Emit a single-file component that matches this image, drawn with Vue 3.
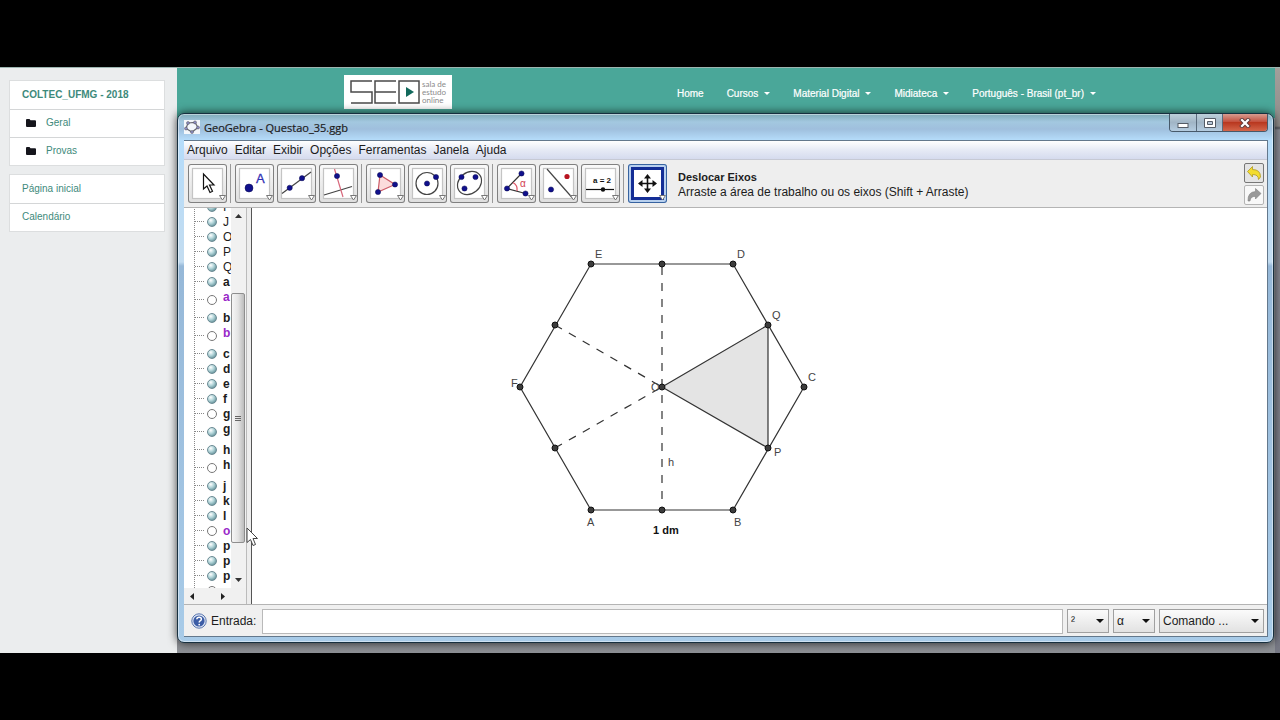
<template>
  <div class="stage">
    <div class="screen">
      <aside class="side">
        <nav class="card">
          <h2 class="card-title">COLTEC_UFMG - 2018</h2>
          <a v-for="item in folders" :key="item" href="#" class="card-row folder-row">
            <svg class="folder" width="10" height="8" viewBox="0 0 10 8">
              <path d="M0 1q0-1 1-1h2.5l1 1.2H9q1 0 1 1V7q0 1-1 1H1Q0 8 0 7z" fill="#15151c" />
            </svg>
            {{ item }}
          </a>
        </nav>
        <nav class="card">
          <a v-for="item in pages" :key="item" href="#" class="card-row">{{ item }}</a>
        </nav>
      </aside>

      <main class="site">
        <header class="site-header">
          <a href="#" class="logo" aria-label="SEO">
            <svg width="70" height="24" viewBox="0 0 70 24" fill="none" stroke="#4a4a4a" stroke-width="1.5">
              <path d="M22 1H1v11h21v11H1M46 1H25v22h21M25 12h21M49 1h20v22H49z" />
              <path d="M56 7v10l8-5z" fill="#12695c" stroke="none" />
            </svg>
            <span class="logo-text">sala de<br>estudo<br>online</span>
          </a>
          <nav class="site-nav">
            <a v-for="link in links" :key="link.label" href="#" class="site-link">
              {{ link.label }}<i v-if="link.menu" class="caret"></i>
            </a>
          </nav>
        </header>
      </main>
      <div class="edge"></div>

      <section class="window">
        <div class="titlebar">
          <svg width="16" height="14" viewBox="0 0 16 14">
            <rect x="0" y="0" width="16" height="14" fill="#f4f7fb" />
            <path d="M4 3l7-.6 3 5.100-6 4.500-6-3.500z" fill="none" stroke="#66666f" stroke-width="1.200" />
            <g fill="#8b8bc4" stroke="#555" stroke-width=".5">
              <circle cx="4" cy="3" r="1.5" /><circle cx="11" cy="2.4" r="1.5" />
              <circle cx="14" cy="7.5" r="1.5" /><circle cx="2" cy="8.5" r="1.5" />
              <circle cx="8" cy="12" r="1.5" />
            </g>
          </svg>
          <span class="title">GeoGebra - Questao_35.ggb</span>
          <div class="win-buttons">
            <button class="win-btn min" aria-label="Minimizar">
              <svg width="12" height="12" viewBox="0 0 12 12"><rect x="1" y="6.500" width="10" height="4" fill="#fff" stroke="#555c66" /></svg>
            </button>
            <button class="win-btn max" aria-label="Maximizar">
              <svg width="12" height="10" viewBox="0 0 12 10" fill="#fff" stroke="#555c66"><path d="M.5.500h11v9H.5z" /><path d="M3.500 3.500h5v3h-5z" fill="#b8c7d8" /></svg>
            </button>
            <button class="win-btn close" aria-label="Fechar">
              <svg width="12" height="10" viewBox="0 0 12 10" stroke-linecap="square">
                <path d="M3 2l6 6M9 2L3 8" stroke="#5c3a3a" stroke-width="4" />
                <path d="M3 2l6 6M9 2L3 8" stroke="#fff" stroke-width="2.200" />
              </svg>
            </button>
          </div>
        </div>

        <div class="client">
          <nav class="menubar">
            <button v-for="m in menus" :key="m" class="menu">{{ m }}</button>
          </nav>

          <div class="toolbar">
            <div v-for="(group, gi) in toolGroups" :key="gi" class="tool-group">
              <button v-for="tool in group" :key="tool" class="tool" :class="{ active: tool === 'move-view' }" :aria-label="tool">
                <svg width="39" height="39" viewBox="0 0 39 39" fill="none" stroke-width="1.200">
                  <rect class="tool-box" x="4.500" y="4.500" width="30" height="30" />
                  <path v-if="tool === 'pointer'" d="M15.500 10v15l3.500-3 3 6.500 2.500-1.200-3-6.300h4.500z" fill="#fff" stroke="#111" />
                  <template v-else-if="tool === 'point'">
                    <circle cx="14" cy="24" r="4" class="blue" />
                    <text x="21" y="19" class="letter-a">A</text>
                  </template>
                  <template v-else-if="tool === 'line'">
                    <path d="M5 29.500L34 8" stroke="#444" />
                    <circle cx="12.700" cy="23.800" r="2.600" class="blue" /><circle cx="25" cy="14.200" r="2.600" class="blue" />
                  </template>
                  <template v-else-if="tool === 'perpendicular'">
                    <path d="M5 31l28-8.500" stroke="#444" /><path d="M15.500 5L24 33" stroke="#d8687c" />
                    <circle cx="18" cy="12" r="2.600" class="blue" />
                  </template>
                  <template v-else-if="tool === 'polygon'">
                    <path d="M14 11l15 9.500L12 28z" fill="#fbdcdc" stroke="#cc5a66" />
                    <circle cx="14" cy="11" r="2.600" class="blue" /><circle cx="29" cy="20.500" r="2.600" class="blue" /><circle cx="12" cy="28" r="2.600" class="blue" />
                  </template>
                  <template v-else-if="tool === 'circle'">
                    <circle cx="19" cy="19.500" r="11" stroke="#444" />
                    <circle cx="19" cy="19.500" r="2.600" class="blue" /><circle cx="28" cy="13" r="2.600" class="blue" />
                  </template>
                  <template v-else-if="tool === 'conic'">
                    <ellipse cx="19.500" cy="19" rx="13" ry="10.500" transform="rotate(-40 19.500 19)" stroke="#444" />
                    <circle cx="11.500" cy="13" r="2.600" class="blue" /><circle cx="25.500" cy="13" r="2.600" class="blue" /><circle cx="14.500" cy="24.500" r="2.600" class="blue" />
                  </template>
                  <template v-else-if="tool === 'angle'">
                    <path d="M24.500 9.500L10 24.500l18.500 5" stroke="#333" />
                    <path d="M16 18.500q5 3 4 8.500" stroke="#dd5566" />
                    <text x="23" y="23" class="alpha">α</text>
                    <circle cx="24.500" cy="9.500" r="2.600" class="blue" /><circle cx="10" cy="24.500" r="2.600" class="blue" /><circle cx="28.500" cy="29.500" r="2.600" class="blue" />
                  </template>
                  <template v-else-if="tool === 'reflect'">
                    <path d="M8 5l25 28.500" stroke="#444" />
                    <circle cx="12" cy="25.500" r="2.600" class="blue" /><circle cx="28" cy="12.500" r="2.600" fill="#b81420" />
                  </template>
                  <template v-else-if="tool === 'slider'">
                    <text x="12" y="19" class="slider-text">a = 2</text>
                    <path d="M5 25.500h28" stroke="#111" /><circle cx="22" cy="25.500" r="2.200" fill="#111" />
                  </template>
                  <g v-else fill="#111">
                    <path d="M19.500 13v13M13 19.500h13" stroke="#111" stroke-width="1.600" />
                    <path d="M19.500 10l-3.500 4.500h7zM19.500 29l-3.500-4.500h7zM10 19.500l4.500-3.500v7zM29 19.500l-4.500-3.500v7z" />
                  </g>
                  <path d="M31.500 31.500h6l-3 4.500z" fill="#fff" stroke="#777" stroke-width="1" />
                </svg>
              </button>
            </div>
            <div class="tool-help">
              <strong>Deslocar Eixos</strong>
              <span>Arraste a área de trabalho ou os eixos (Shift + Arraste)</span>
            </div>
            <div class="history">
              <button class="hist undo" aria-label="Desfazer">
                <svg width="16" height="16" viewBox="0 0 16 16"><path d="M1.500 6.500L6.500 1.500v3q8 0 8 7.500l-2 2.500q0-5-6-5v2.500z" fill="#f3dc2e" stroke="#b09a20" stroke-width=".8" /></svg>
              </button>
              <button class="hist" aria-label="Refazer">
                <svg width="16" height="16" viewBox="0 0 16 16"><path d="M15 6.500L9.500 1.500v3Q1.500 5 2 14h2q.5-5 5.500-4.500V12z" fill="#999" stroke="#808080" stroke-width=".6" /></svg>
              </button>
            </div>
          </div>

          <div class="work">
            <div class="algebra">
              <div class="tree-wrap">
                <div class="tree">
                  <ul>
                    <li v-for="(row, i) in rows" :key="i" :class="{ tall: row.tall, caps: row.caps }">
                      <span class="branch"></span>
                      <span class="ball" :class="{ hollow: row.hollow }"></span>
                      <span class="name" :class="{ purple: row.purple }">{{ row.name }}</span>
                    </li>
                  </ul>
                </div>
                <div class="scroll-v">
                  <button class="arrow" aria-label="Subir"><svg width="7" height="4" viewBox="0 0 7 4"><path d="M0 4l3.500-4L7 4z" fill="#333" /></svg></button>
                  <div class="track-above"></div>
                  <div class="thumb"><i></i><i></i><i></i></div>
                  <div class="track-below"></div>
                  <button class="arrow" aria-label="Descer"><svg width="7" height="4" viewBox="0 0 7 4"><path d="M0 0l3.500 4L7 0z" fill="#333" /></svg></button>
                </div>
              </div>
              <div class="scroll-h">
                <button class="arrow" aria-label="Esquerda"><svg width="4" height="7" viewBox="0 0 4 7"><path d="M4 0L0 3.500 4 7z" fill="#222" /></svg></button>
                <button class="arrow" aria-label="Direita"><svg width="4" height="7" viewBox="0 0 4 7"><path d="M0 0l4 3.500L0 7z" fill="#222" /></svg></button>
              </div>
              <svg class="cursor" width="13" height="20" viewBox="0 0 13 20">
                <path d="M1 1v14.500l3.500-3 2.500 6 2.500-1-2.500-6h4.500z" fill="#fff" stroke="#444" />
              </svg>
            </div>
            <div class="splitter"></div>
            <svg class="graphics">
              <polygon points="410,179 516,240 516,117" fill="#e4e4e4" stroke="#333" stroke-width="1.200" />
              <polygon points="339,302 481,302 552,179 481,56 339,56 268,179" fill="none" stroke="#333" stroke-width="1.200" />
              <g stroke="#333" stroke-width="1.200" stroke-dasharray="8 8">
                <line x1="410" y1="59" x2="410" y2="302" />
                <line x1="303" y1="117" x2="410" y2="179" />
                <line x1="303" y1="240" x2="410" y2="179" />
              </g>
              <circle v-for="(p, i) in points" :key="i" :cx="p[0]" :cy="p[1]" r="3" fill="#3c3c3c" stroke="#111" />
              <text v-for="l in labels" :key="l.text" :x="l.x" :y="l.y" class="label">{{ l.text }}</text>
              <text x="401" y="326" class="measure">1 dm</text>
            </svg>
          </div>

          <form class="inputbar" @submit.prevent>
            <svg width="16" height="16" viewBox="0 0 16 16">
              <circle cx="8" cy="8" r="7.200" fill="#dfe6f4" stroke="#5a77b0" />
              <circle cx="8" cy="8" r="5.600" fill="#3c5da6" />
              <path d="M5.800 6.200Q6 4.200 8.200 4.200t2.200 1.900q0 1.200-1.300 1.800Q8.200 8.400 8.200 9.500" fill="none" stroke="#fff" stroke-width="1.500" />
              <circle cx="8.200" cy="11.600" r=".9" fill="#fff" />
            </svg>
            <label for="entrada">Entrada:</label>
            <input id="entrada" v-model="command" type="text">
            <div class="picker small">
              <select aria-label="Expoente"><option>²</option></select>
              <i class="drop"></i>
            </div>
            <div class="picker small">
              <select aria-label="Símbolo"><option>α</option></select>
              <i class="drop"></i>
            </div>
            <div class="picker wide">
              <select aria-label="Comando"><option>Comando ...</option></select>
              <i class="drop"></i>
            </div>
          </form>
        </div>
      </section>
    </div>
  </div>
</template>

<script setup>
import { ref } from 'vue';

const command = ref('');

const folders = ['Geral', 'Provas'];
const pages = ['Página inicial', 'Calendário'];
const links = [
  { label: 'Home' },
  { label: 'Cursos', menu: true },
  { label: 'Material Digital', menu: true },
  { label: 'Midiateca', menu: true },
  { label: 'Português - Brasil (pt_br)', menu: true }
];
const menus = ['Arquivo', 'Editar', 'Exibir', 'Opções', 'Ferramentas', 'Janela', 'Ajuda'];
const toolGroups = [
  ['pointer'],
  ['point', 'line', 'perpendicular'],
  ['polygon', 'circle', 'conic'],
  ['angle', 'reflect', 'slider'],
  ['move-view']
];

const rows = [
  { name: 'I', caps: true },
  { name: 'J', caps: true },
  { name: 'O', caps: true },
  { name: 'P', caps: true },
  { name: 'Q', caps: true },
  { name: 'a' },
  { name: 'a', tall: true, hollow: true, purple: true },
  { name: 'b' },
  { name: 'b', tall: true, hollow: true, purple: true },
  { name: 'c' },
  { name: 'd' },
  { name: 'e' },
  { name: 'f' },
  { name: 'g', hollow: true },
  { name: 'g', tall: true },
  { name: 'h' },
  { name: 'h', tall: true, hollow: true },
  { name: 'j' },
  { name: 'k' },
  { name: 'l' },
  { name: 'o', hollow: true, purple: true },
  { name: 'p' },
  { name: 'p' },
  { name: 'p' },
  { name: '', hollow: true }
];

const points = [
  [339, 302], [481, 302], [552, 179], [481, 56], [339, 56], [268, 179],
  [410, 302], [410, 56], [303, 240], [303, 117], [516, 240], [516, 117], [410, 179]
];
const labels = [
  { text: 'A', x: 335, y: 318 },
  { text: 'B', x: 482, y: 318 },
  { text: 'C', x: 556, y: 173 },
  { text: 'D', x: 485, y: 50 },
  { text: 'E', x: 343, y: 50 },
  { text: 'F', x: 259, y: 179 },
  { text: 'O', x: 399, y: 183 },
  { text: 'P', x: 522, y: 248 },
  { text: 'Q', x: 520, y: 111 },
  { text: 'h', x: 416, y: 258 }
];
</script>

<style>
body {
  background: #000;
}
</style>

<style scoped>
* {
  box-sizing: border-box;
}

.stage {
  display: flex;
  min-height: 100vh;
  padding: 67px 0;
  background: #000;
  font-family: "Liberation Sans", Arial, sans-serif;
  font-size: 12px;
  color: #1c1c1c;
}

button {
  padding: 0;
  border: none;
  background: none;
  font: inherit;
  color: inherit;
}

.screen {
  position: relative;
  display: flex;
  flex: 1;
  overflow: hidden;
  border-top: 1px solid #9db5b0;
}

.side {
  display: flex;
  flex-direction: column;
  gap: 8px;
  width: 177px;
  padding: 12px 12px 0 9px;
  background: #ebedee;
}

.card {
  border: 1px solid #dcdedf;
  background: #fff;
  font-size: 10px;
}

.card-title,
.card-row {
  display: flex;
  align-items: center;
  height: 28px;
  margin: 0;
  padding: 0 12px 2px;
  font-size: 10px;
  color: #3d8a7b;
  text-decoration: none;
}

.card-row + .card-row,
.card-title + .card-row {
  border-top: 1px solid #d4d6d7;
}

.folder-row {
  gap: 10px;
  padding-left: 16px;
}

.site {
  flex: 1;
  background: linear-gradient(#a9acb1, #8d9095);
}

.site-header {
  display: flex;
  justify-content: space-between;
  align-items: center;
  height: 50px;
  padding: 0 179px 2px 167px;
  background: #4aa799;
}

.logo {
  display: flex;
  align-items: center;
  gap: 2px;
  width: 108px;
  height: 34px;
  padding-left: 6px;
  background: #fff;
  text-decoration: none;
}

.logo-text {
  font-family: Lato, sans-serif;
  font-size: 8px;
  line-height: 8px;
  color: #8a8a8a;
}

.site-nav {
  display: flex;
  gap: 23px;
  padding-top: 2px;
}

.site-link {
  display: flex;
  align-items: center;
  gap: 6px;
  font-size: 10px;
  color: #fff;
  text-decoration: none;
  -webkit-text-stroke: 0.2px #fff;
}

.caret {
  border: 3px solid transparent;
  border-top-color: #fff;
  border-bottom: none;
}

.edge {
  width: 5px;
  background: linear-gradient(#a39f9b 0, #8f8c8a 58px, #55585f 60px, #8b8d96 62px, #767884 100%);
}

.window {
  position: absolute;
  top: 45px;
  right: 6px;
  bottom: 10px;
  left: 177px;
  display: flex;
  flex-direction: column;
  padding: 0 5px 5px 6px;
  border: 1px solid #17303f;
  border-radius: 7px;
  background: linear-gradient(#7fabb8 0, #a3c8e0 8px, #9fbfdd 15px, #b5dcfa 26px, #c3dcf0 148px, #96b8d8 152px, #a8cbe8 100%);
  box-shadow: 0 0 10px rgba(0, 0, 0, 0.75), inset 0 0 0 1px rgba(255, 255, 255, 0.45);
}

.titlebar {
  display: flex;
  align-items: center;
  gap: 4px;
  height: 26px;
}

.title {
  flex: 1;
  font-family: "Open Sans", sans-serif;
  font-size: 11px;
  -webkit-text-stroke: 0.2px #1c1c1c;
}

.win-buttons {
  display: flex;
  align-self: flex-start;
  height: 18px;
  border: 1px solid #47596a;
  border-top: none;
  border-radius: 0 0 4px 4px;
  overflow: hidden;
}

.win-btn {
  display: flex;
  align-items: center;
  justify-content: center;
  width: 26px;
  background: linear-gradient(#bccfd9, #a1b5c6 50%, #b4cce0);
}

.win-btn + .win-btn {
  border-left: 1px solid #5a6b7c;
}

.win-btn.close {
  width: 45px;
  background: linear-gradient(#d79b90, #c4523f 45%, #b93820 50%, #d3664b);
}

.client {
  display: flex;
  flex: 1;
  flex-direction: column;
  min-height: 0;
  border: 1px solid #63788c;
  border-left: none;
  background: #f0f0f0;
}

.menubar {
  display: flex;
  gap: 7px;
  height: 19px;
  padding-left: 3px;
  border-bottom: 1px solid #c6c9d4;
  background: linear-gradient(#fff, #e6eaf5 50%, #d5dbee);
}

.toolbar {
  display: flex;
  align-items: center;
  height: 48px;
  padding: 0 3px 0 4px;
  border-bottom: 1px solid #b4b4b4;
  background: #eee;
}

.tool-group {
  display: flex;
  gap: 3px;
}

.tool-group + .tool-group {
  margin-left: 3px;
  padding-left: 4px;
  border-left: 1px solid #999;
}

.tool {
  display: flex;
  width: 39px;
  height: 39px;
  border-radius: 3px;
  background: linear-gradient(#fafafa, #dedede);
  box-shadow: inset 0 0 0 1px #808080;
}

.tool-box {
  fill: #fff;
  stroke: #c4c4c4;
}

.tool.active {
  background: #b8d0ee;
  box-shadow: inset 0 0 0 1px #3763a0;
}

.tool.active .tool-box {
  stroke: #142e96;
  stroke-width: 3px;
}

.blue {
  fill: #10108c;
  stroke: #0a0a50;
  stroke-width: 0.5px;
}

.letter-a {
  fill: #3030b4;
  stroke: #3030b4;
  stroke-width: 0.3px;
  font-size: 13px;
}

.alpha {
  fill: #d23c50;
  font-size: 10px;
}

.slider-text {
  fill: #111;
  font-size: 8px;
  font-weight: bold;
}

.tool-help {
  display: flex;
  flex: 1;
  flex-direction: column;
  gap: 1px;
  padding: 2px 0 0 11px;
  line-height: 14px;
}

.tool-help strong {
  font-size: 11px;
}

.history {
  display: flex;
  flex-direction: column;
  gap: 2px;
}

.hist {
  display: flex;
  align-items: center;
  justify-content: center;
  width: 20px;
  height: 20px;
  border: 1px solid #b4b4b4;
  border-radius: 2px;
  background: #f8f8f8;
}

.hist.undo {
  border-color: #777;
  background: #e4e4e4;
}

.work {
  display: flex;
  flex: 1;
  min-height: 0;
}

.algebra {
  position: relative;
  display: flex;
  flex-direction: column;
  width: 62px;
}

.tree-wrap {
  display: flex;
  flex: 1;
  min-height: 0;
}

.tree {
  width: 47px;
  overflow: hidden;
  background: #fff;
}

.tree ul {
  margin: -9px 0 0 10px;
  padding: 0;
  border-left: 1px dotted #888;
  list-style: none;
}

.tree li {
  display: flex;
  align-items: center;
  height: 15px;
  font-weight: bold;
}

.tree li.caps {
  font-weight: normal;
}

.tree li.tall {
  height: 21px;
}

.tree li.tall .name {
  padding-bottom: 6px;
}

.branch {
  flex: none;
  width: 9px;
  border-top: 1px dotted #888;
}

.ball {
  flex: none;
  width: 10px;
  height: 10px;
  margin: 0 6px 0 3px;
  border: 1px solid #6c8b94;
  border-radius: 50%;
  background: radial-gradient(circle at 35% 30%, #fff 0, #b4d6da 40%, #43757f 100%);
}

.ball.hollow {
  border-color: #777;
  background: #fff;
}

.name.purple {
  color: #9928c8;
}

.scroll-v {
  display: flex;
  flex-direction: column;
  width: 15px;
  background: #f1f1f1;
}

.arrow {
  display: flex;
  align-items: center;
  justify-content: center;
  width: 15px;
  height: 16px;
}

.track-above {
  flex: 70;
}

.track-below {
  flex: 29;
}

.thumb {
  display: flex;
  flex: 250;
  flex-direction: column;
  align-items: center;
  justify-content: center;
  gap: 1px;
  width: 14px;
  border: 1px solid #8e8e8e;
  border-radius: 2px;
  background: linear-gradient(90deg, #f6f6f6, #e4e4e4 50%, #bcbcbc);
}

.thumb i {
  width: 6px;
  height: 1px;
  background: #666;
}

.scroll-h {
  display: flex;
  justify-content: space-between;
  width: 46px;
  height: 16px;
  background: #f1f1f1;
}

.cursor {
  position: absolute;
  top: 319px;
  left: 62px;
}

.splitter {
  width: 6px;
  border-right: 1px solid #555;
  border-left: 1px solid #bbb;
  background: #ededed;
}

.graphics {
  flex: 1;
  min-width: 0;
  height: 100%;
  background: #fff;
}

.label {
  fill: #444;
  font-size: 11px;
}

.measure {
  fill: #111;
  font-size: 11px;
  font-weight: bold;
}

.inputbar {
  display: flex;
  align-items: center;
  gap: 4px;
  height: 32px;
  padding: 1px 3px 0 7px;
  border-top: 1px solid #b4b4b4;
}

.inputbar input {
  flex: 1;
  min-width: 0;
  height: 25px;
  margin-left: 2px;
  padding: 0 4px;
  border: 1px solid #b9b9b9;
  font: inherit;
}

.picker {
  position: relative;
  height: 24px;
}

.picker.small {
  width: 42px;
}

.picker.wide {
  width: 105px;
}

.picker select {
  width: 100%;
  height: 100%;
  padding: 0 3px;
  border: 1px solid #a0a0a0;
  border-radius: 0;
  background: linear-gradient(#fbfbfb, #e2e2e2);
  appearance: none;
  font: inherit;
  color: inherit;
}

.drop {
  position: absolute;
  top: 10px;
  right: 5px;
  border: 4px solid transparent;
  border-top-color: #111;
  border-bottom: none;
  pointer-events: none;
}
</style>
